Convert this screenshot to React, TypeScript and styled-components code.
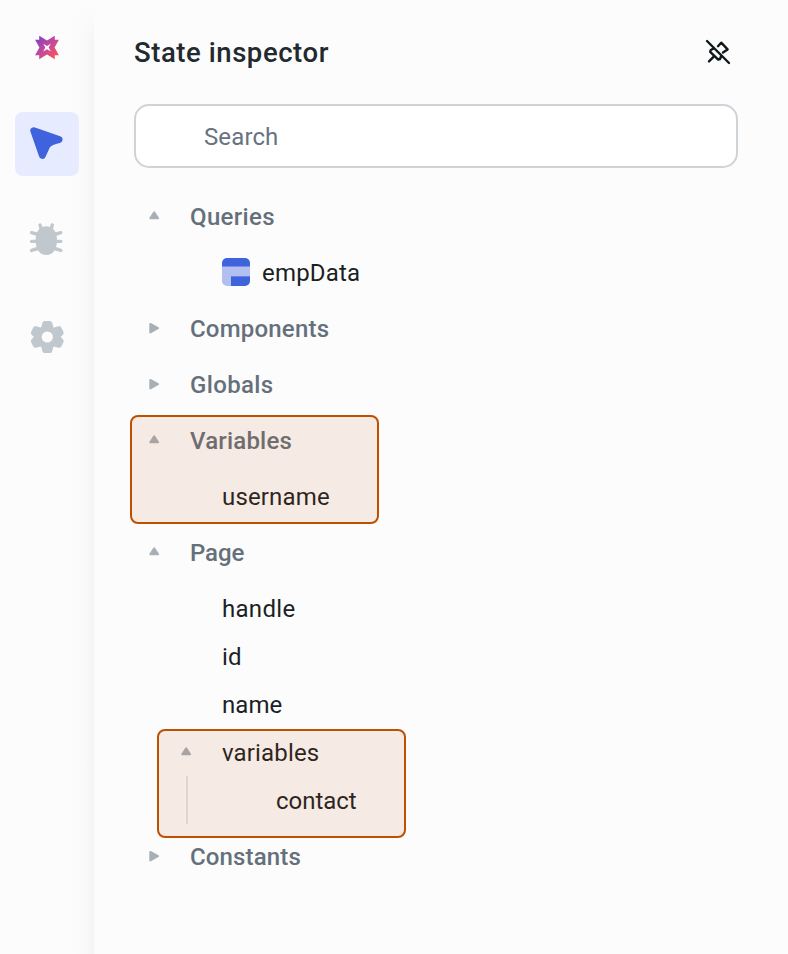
import React from "react";
import styled, { createGlobalStyle } from "styled-components";

const GlobalStyle = createGlobalStyle`
  * { box-sizing: border-box; }
  body {
    margin: 0;
    background: #fcfcfd;
    font-family: Roboto, "Noto Sans", sans-serif;
    color: #1b1f24;
  }
`;

const Shell = styled.div`
  display: flex;
  width: 788px;
  height: 954px;
  overflow: hidden;
  background: #fcfcfd;
`;

const Sidebar = styled.nav`
  display: flex;
  flex-direction: column;
  align-items: center;
  flex: none;
  width: 94px;
  background:
    linear-gradient(to bottom, #fcfcfd 8px, rgba(252, 252, 253, 0) 44px),
    linear-gradient(to right, #fcfcfd 68px, #fafafb 84px, #f4f4f6 94px);
`;

const LogoBox = styled.div`
  display: flex;
  align-items: flex-end;
  height: 60px;
  margin-bottom: 52px;
  svg { display: block; }
`;

const NavButton = styled.button<{ $active?: boolean }>`
  display: flex;
  align-items: center;
  justify-content: center;
  width: 64px;
  height: 64px;
  margin: 0 0 32px;
  padding: 0;
  border: 0;
  border-radius: 8px;
  background: ${(p) => (p.$active ? "#e6ebff" : "transparent")};
`;

const Panel = styled.main`
  flex: 1;
  padding: 0 50px 0 40px;
`;

const Header = styled.header`
  display: flex;
  align-items: center;
  justify-content: space-between;
  height: 104px;
  padding: 0 6px 0 0;
`;

const Title = styled.h1`
  margin: 2px 0 0;
  font-size: 27.5px;
  font-weight: 500;
  letter-spacing: 0.56px;
  line-height: 36px;
  color: #232a2e;
`;

const PinButton = styled.button`
  display: flex;
  padding: 0;
  border: 0;
  background: none;
`;

const SearchInput = styled.input`
  display: block;
  width: 604px;
  height: 64px;
  padding: 2px 68px 0;
  border: 2px solid #ced3d8;
  border-radius: 15px;
  outline: none;
  background: #fff;
  font: 400 24px Roboto, sans-serif;
  letter-spacing: 0.12px;
  &::placeholder { color: #687280; opacity: 1; }
`;

const Tree = styled.div`
  padding-top: 21px;
`;

const Group = styled.section`
  position: relative;
`;

const GroupRow = styled.div`
  display: flex;
  align-items: center;
  height: 56px;
  padding-left: 14px;
  gap: 30px;
`;

const GroupName = styled.span<{ $spacing: number }>`
  font-size: 24px;
  font-weight: 500;
  line-height: 32px;
  letter-spacing: ${(p) => p.$spacing}px;
  color: #65707b;
`;

const Children = styled.div`
  padding: 4px 0;
`;

const Leaf = styled.div`
  display: flex;
  align-items: center;
  height: 48px;
  padding-left: 88px;
  gap: 12px;
`;

const LeafName = styled.span<{ $spacing: number }>`
  font-size: 24px;
  line-height: 32px;
  letter-spacing: ${(p) => p.$spacing}px;
`;

const Branch = styled.div`
  position: relative;
`;

const BranchRow = styled.div`
  display: flex;
  align-items: center;
  height: 48px;
  padding-left: 46px;
  gap: 30px;
`;

const Nested = styled.div`
  display: flex;
  align-items: center;
  height: 48px;
  margin-top: -1px;
  margin-bottom: 1px;
  margin-left: 52px;
  padding: 2px 0 0 88px;
  border-left: 2px solid #e3e6e8;
`;

const Highlight = styled.div<{ $left: number; $top: number }>`
  position: absolute;
  left: ${(p) => p.$left}px;
  top: ${(p) => p.$top}px;
  width: 249px;
  height: 109px;
  border: 2px solid #bf5000;
  border-radius: 8px;
  background: rgba(196, 82, 18, 0.105);
  pointer-events: none;
`;

const CaretBox = styled.svg`
  display: block;
  flex: none;
  width: 12px;
  height: 14px;
  margin-bottom: 3px;
  fill: #a7afb7;
  stroke: #a7afb7;
  stroke-width: 2;
  stroke-linejoin: round;
`;

const Caret = ({ open }: { open?: boolean }) => (
  <CaretBox viewBox="0 0 12 14">
    <path d={open ? "M2.3 9.2 6.2 3.4 10.1 9.2Z" : "M2.3 3V11.4L10 7.2Z"} />
  </CaretBox>
);

const Logo = () => (
  <svg width="26" height="26" viewBox="0 0 26 26">
    <defs>
      <linearGradient id="brand" x1="2" y1="3" x2="22" y2="24" gradientUnits="userSpaceOnUse">
        <stop stopColor="#7c3fc6" />
        <stop offset="0.5" stopColor="#c44a9b" />
        <stop offset="1" stopColor="#fb5258" />
      </linearGradient>
    </defs>
    <path
      fill="url(#brand)"
      fillRule="evenodd"
      d="M5.2 1.8 13 6.6 20.8 1.8V5.8H24.9L20.6 13.6 24.9 21.3H20.8V25.3L13 20.6 5.2 25.3V21.3H1.1L5.4 13.6 1.1 5.8H5.2ZM9.2 9.8 11.3 13.6 9.2 17.4 13 15.3 16.8 17.4 14.7 13.6 16.8 9.8 13 11.9Z"
    />
  </svg>
);

const CursorIcon = () => (
  <svg width="64" height="64" viewBox="0 0 64 64">
    <path
      d="M18.8 18.7 44 27.6Q34.5 29.6 31.8 33.6L27.4 43.4Z"
      fill="#3e63dd"
      stroke="#3e63dd"
      strokeWidth="7"
      strokeLinejoin="round"
    />
  </svg>
);

const BugIcon = () => (
  <svg width="64" height="64" viewBox="0 0 64 64">
    <path
      d="M31.3 18.2C38 18.2 42 23.5 42 32.5 42 41 38 47 31.3 47S20.6 41 20.6 32.5C20.6 23.5 24.6 18.2 31.3 18.2Z"
      fill="#c1c8cd"
    />
    <path
      d="M25 17 26.6 22M37.3 17 35.9 22M16.6 24.7 23 26.5M45.8 24.7 39.6 26.5M16.6 33.4H45.8M16.6 42.4 23 40.5M45.8 42.4 39.6 40.5"
      fill="none"
      stroke="#c1c8cd"
      strokeWidth="3.4"
      strokeLinecap="round"
    />
  </svg>
);

const GearIcon = () => (
  <svg width="64" height="64" viewBox="0 0 64 64">
    <path
      fill="#c1c8cd"
      stroke="#c1c8cd"
      strokeWidth="5"
      strokeLinejoin="round"
      d="M29.8 19.4h5l1.3 5.2 2.8 1.6 5.2-1.5 2.1 4.2-3.8 3.8v.6l3.8 3.8-2.1 4.2-5.2-1.5-2.8 1.6-1.3 5.2h-5l-1.3-5.2-2.8-1.6-5.2 1.5-2.1-4.2 3.8-3.8v-.6l-3.8-3.8 2.1-4.2 5.2 1.5 2.8-1.6Z"
    />
    <circle cx="32.3" cy="33" r="5.6" fill="#fcfcfd" />
  </svg>
);

const PinOffIcon = () => (
  <svg width="28" height="28" viewBox="0 0 28 28" fill="none" stroke="#11181c" strokeWidth="2.4" strokeLinecap="round" strokeLinejoin="round">
    <path d="M3 3 25 25M5 23.4 9.5 18.8M9.8 10.4 6.8 12 6.2 13.8 14.2 21.6 16 21 17.2 18M14 8.2 17.2 4.7 23.6 11.4 19 14.6" />
  </svg>
);

const QueryIconBox = styled.svg`
  display: block;
  flex: none;
  margin-bottom: 2px;
`;

const QueryIcon = () => (
  <QueryIconBox width="28" height="28" viewBox="0 0 28 28">
    <path d="M0 9V5A5 5 0 0 1 5 0H23A5 5 0 0 1 28 5V9Z" fill="#3e63dd" />
    <path d="M0 8.5H28V18.5H9V28H5A5 5 0 0 1 0 23Z" fill="#b1bff1" />
    <path d="M9 18.3H28V23A5 5 0 0 1 23 28H9Z" fill="#3e63dd" />
  </QueryIconBox>
);

interface GroupProps {
  name: string;
  spacing: number;
  open?: boolean;
  children?: React.ReactNode;
}

const TreeGroup = ({ name, spacing, open, children }: GroupProps) => (
  <Group>
    <GroupRow>
      <Caret open={open} />
      <GroupName $spacing={spacing}>{name}</GroupName>
    </GroupRow>
    {children}
  </Group>
);

const TreeLeaf = ({ name, spacing, icon }: { name: string; spacing: number; icon?: React.ReactNode }) => (
  <Leaf>
    {icon}
    <LeafName $spacing={spacing}>{name}</LeafName>
  </Leaf>
);

export default function App() {
  return (
    <>
      <GlobalStyle />
      <Shell>
        <Sidebar>
          <LogoBox><Logo /></LogoBox>
          <NavButton $active aria-label="Inspector"><CursorIcon /></NavButton>
          <NavButton aria-label="Debugger"><BugIcon /></NavButton>
          <NavButton aria-label="Settings"><GearIcon /></NavButton>
        </Sidebar>
        <Panel>
          <Header>
            <Title>State inspector</Title>
            <PinButton aria-label="Unpin"><PinOffIcon /></PinButton>
          </Header>
          <SearchInput placeholder="Search" />
          <Tree>
            <TreeGroup name="Queries" spacing={0.35} open>
              <Children>
                <TreeLeaf name="empData" spacing={0.2} icon={<QueryIcon />} />
              </Children>
            </TreeGroup>
            <TreeGroup name="Components" spacing={0.2} />
            <TreeGroup name="Globals" spacing={0.35} />
            <TreeGroup name="Variables" spacing={0.2} open>
              <Children>
                <TreeLeaf name="username" spacing={0.15} />
              </Children>
              <Highlight $left={-4} $top={2} />
            </TreeGroup>
            <TreeGroup name="Page" spacing={-0.1} open>
              <Children>
                <TreeLeaf name="handle" spacing={0.3} />
                <TreeLeaf name="id" spacing={0.2} />
                <TreeLeaf name="name" spacing={0.05} />
                <Branch>
                  <BranchRow>
                    <Caret open />
                    <LeafName $spacing={0.15}>variables</LeafName>
                  </BranchRow>
                  <Nested>
                    <LeafName $spacing={-0.02}>contact</LeafName>
                  </Nested>
                  <Highlight $left={23} $top={0} />
                </Branch>
              </Children>
            </TreeGroup>
            <TreeGroup name="Constants" spacing={0.15} />
          </Tree>
        </Panel>
      </Shell>
    </>
  );
}
